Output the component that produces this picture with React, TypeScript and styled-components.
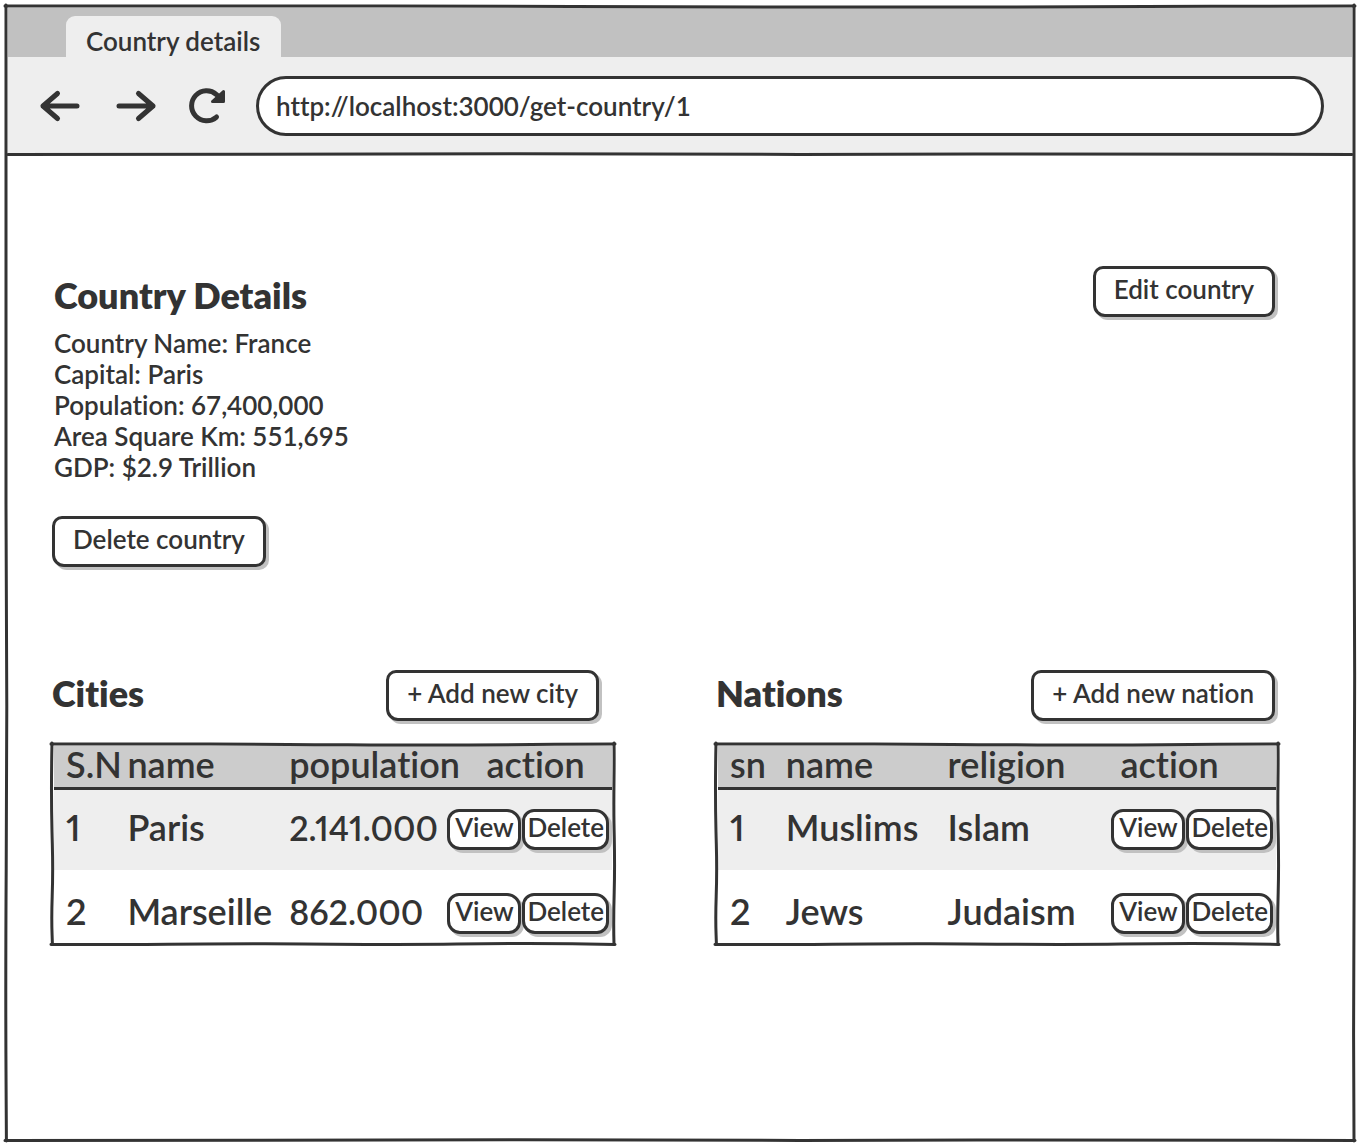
import React from "react";
import styled, { createGlobalStyle, css } from "styled-components";

const ink = "#333333";
const shade = "#c1c1c1";

const GlobalStyle = createGlobalStyle`
  *, *::before, *::after { box-sizing: border-box; }
  body {
    margin: 0;
    background: #ffffff;
    color: ${ink};
    font-family: Lato, "Open Sans", sans-serif;
    font-size: 26px;
    font-weight: 600;
    font-variant-ligatures: none;
    line-height: 31px;
  }
  button, input { font: inherit; font-variant-ligatures: none; color: inherit; }
  h1, h2, p, ul { margin: 0; padding: 0; }
`;

/* ---- hand-drawn pen strokes laid over the edges of a box ---- */

type Side = "top" | "right" | "bottom" | "left";

const sidePlace = {
  top: css`top: -2px; left: 0; width: 100%; height: 6px;`,
  bottom: css`bottom: -2px; left: 0; width: 100%; height: 6px;`,
  left: css`left: -2px; top: 0; width: 6px; height: 100%;`,
  right: css`right: -2px; top: 0; width: 6px; height: 100%;`,
};

const StrokeSvg = styled.svg<{ $side: Side }>`
  position: absolute;
  display: block;
  overflow: visible;
  pointer-events: none;
  fill: none;
  stroke: ${ink};
  stroke-width: 3px;
  stroke-linecap: round;
  ${(p) => sidePlace[p.$side]}
`;

const strokePaths: Record<Side, string> = {
  top: "M0 3 C15 2.4 28 3 42 3.4 S62 4.4 74 4 S90 3 100 3",
  bottom: "M0 3.4 C14 4 24 2.6 38 2.8 S60 4 72 3 S92 2.4 100 3.4",
  left: "M3 0 C2.4 14 2.2 28 3 44 S4.2 62 3.2 76 S3 92 3.4 100",
  right: "M3 0 C3.6 12 2.4 24 3 40 S4 60 3.2 74 S2.4 90 3 100",
};

function Stroke({ side }: { side: Side }) {
  const flat = side === "top" || side === "bottom";
  return (
    <StrokeSvg
      $side={side}
      viewBox={flat ? "0 0 100 6" : "0 0 6 100"}
      preserveAspectRatio="none"
      aria-hidden="true"
    >
      <path d={strokePaths[side]} vectorEffect="non-scaling-stroke" />
    </StrokeSvg>
  );
}

function PenOutline() {
  return (
    <>
      <Stroke side="top" />
      <Stroke side="right" />
      <Stroke side="bottom" />
      <Stroke side="left" />
    </>
  );
}

/* ---- browser window ---- */

const Page = styled.div`
  min-height: 100vh;
  padding: 5px;
  display: flex;
`;

const Window = styled.div`
  position: relative;
  flex: 1;
  min-width: 0;
  padding: 3px;
`;

const TabStrip = styled.div`
  display: flex;
  align-items: flex-end;
  height: 49px;
  padding-left: 58px;
  background: ${shade};
`;

const Tab = styled.button`
  height: 41px;
  padding: 9px 21px 0 20px;
  border: 0;
  border-radius: 9px 9px 0 0;
  background: #eeeeee;
  line-height: 31px;
  white-space: nowrap;
`;

const Toolbar = styled.div`
  position: relative;
  display: flex;
  align-items: center;
  height: 98px;
  padding: 0 28px 0 32px;
  background: #eeeeee;
`;

const NavButtons = styled.div`
  display: flex;
  gap: 36px;
  margin-right: 24px;
`;

const NavButton = styled.button`
  display: block;
  width: 40px;
  height: 40px;
  padding: 0;
  border: 0;
  background: none;
  svg { display: block; overflow: visible; }
`;

const Address = styled.input`
  flex: 1;
  min-width: 0;
  height: 60px;
  padding: 0 17px;
  border: 3px solid ${ink};
  border-radius: 30px;
  background: #ffffff;
  outline: 0;
`;

/* ---- page content ---- */

const Content = styled.main`
  padding: 111px 73px 60px 43px;
`;

const Button = styled.button<{ $small?: boolean }>`
  height: ${(p) => (p.$small ? 41 : 51)}px;
  min-width: ${(p) => (p.$small ? 74 : 100)}px;
  padding: ${(p) => (p.$small ? "0 2px 4px" : "0 18px 4px")};
  border: 3px solid ${ink};
  border-radius: ${(p) => (p.$small ? "12px 14px 12px 13px" : "10px 11px 10px 12px")};
  background: #ffffff;
  box-shadow: 3px 3px 0 ${shade};
  line-height: 31px;
  white-space: nowrap;
`;

const Summary = styled.section`
  display: flex;
  justify-content: space-between;
  align-items: flex-start;
  padding-right: 4px;
`;

const SummaryText = styled.div`
  padding: 8px 0 0 3px;
`;

const Title = styled.h1`
  font-size: 36px;
  font-weight: 800;
  line-height: 43px;
`;

const Facts = styled.ul`
  padding-top: 11px;
  list-style: none;
`;

const DeleteRow = styled.div`
  padding: 33px 0 0 1px;
`;

const Lists = styled.div`
  display: grid;
  grid-template-columns: repeat(2, minmax(0, 1fr));
  column-gap: 100px;
  padding-top: 103px;
`;

const ListHeader = styled.header<{ $inset: number }>`
  display: flex;
  justify-content: space-between;
  align-items: flex-start;
  height: 73px;
  padding-right: ${(p) => p.$inset}px;
  padding-left: 1px;
`;

const ListTitle = styled.h2`
  padding-top: 2px;
  font-size: 36px;
  font-weight: 800;
  line-height: 43px;
`;

const TableFrame = styled.div`
  position: relative;
  padding: 3px;
`;

const Table = styled.table`
  width: 100%;
  border-collapse: collapse;
  table-layout: fixed;
  font-size: 36px;
  line-height: 37px;
  white-space: nowrap;
`;

const HeadRow = styled.tr`
  height: 41px;
  background: #cccccc;
  border-bottom: 3px solid ${ink};
`;

const HeadCell = styled.th<{ $width?: string; $indent?: number }>`
  width: ${(p) => p.$width ?? "auto"};
  padding: 0 0 4px ${(p) => p.$indent ?? 12}px;
  font-weight: inherit;
  text-align: left;
`;

const BodyRow = styled.tr`
  height: 81px;
  &:nth-child(odd) { background: #eeeeee; }
  &:last-child { height: 72px; }
  &:last-child > td { padding-top: 15px; }
`;

const Cell = styled.td<{ $amount?: boolean }>`
  padding: 0 0 4px 12px;
  font-size: ${(p) => (p.$amount ? 34 : 36)}px;
  font-variant-numeric: proportional-nums;
`;

const ActionCell = styled.td`
  padding: 0 0 0 14px;
`;

const Actions = styled.div`
  display: flex;
  gap: 1px;
  font-size: 26px;
`;

type ListProps = {
  title: string;
  addLabel: string;
  inset: number;
  widths: string[];
  actionIndent: number;
  columns: string[];
  rows: string[][];
};

function EntityList({ title, addLabel, inset, widths, actionIndent, columns, rows }: ListProps) {
  return (
    <section>
      <ListHeader $inset={inset}>
        <ListTitle>{title}</ListTitle>
        <Button type="button">{addLabel}</Button>
      </ListHeader>
      <TableFrame>
        <Table aria-label={title}>
          <thead>
            <HeadRow>
              {columns.map((name, i) => (
                <HeadCell key={name} $width={widths[i]} scope="col">{name}</HeadCell>
              ))}
              <HeadCell $indent={actionIndent} scope="col">action</HeadCell>
            </HeadRow>
          </thead>
          <tbody>
            {rows.map((row) => (
              <BodyRow key={row[0]}>
                {row.map((value, i) => (
                  <Cell key={value} $amount={columns[i] === "population"}>{value}</Cell>
                ))}
                <ActionCell>
                  <Actions>
                    <Button type="button" $small>View</Button>
                    <Button type="button" $small>Delete</Button>
                  </Actions>
                </ActionCell>
              </BodyRow>
            ))}
          </tbody>
        </Table>
        <PenOutline />
      </TableFrame>
    </section>
  );
}

const facts = [
  "Country Name: France",
  "Capital: Paris",
  "Population: 67,400,000",
  "Area Square Km: 551,695",
  "GDP: $2.9 Trillion",
];

export default function App() {
  return (
    <Page>
      <GlobalStyle />
      <Window>
        <TabStrip role="tablist">
          <Tab type="button" role="tab" aria-selected="true">Country details</Tab>
        </TabStrip>
        <Toolbar>
          <NavButtons>
            <NavButton type="button" aria-label="Back">
              <svg width="40" height="40" viewBox="0 0 40 40" fill="none" stroke={ink} strokeWidth="5" strokeLinecap="round" strokeLinejoin="round">
                <path d="M37 20H3M17.500 7.500L3 20L17.500 32.500" />
              </svg>
            </NavButton>
            <NavButton type="button" aria-label="Forward">
              <svg width="40" height="40" viewBox="0 0 40 40" fill="none" stroke={ink} strokeWidth="5" strokeLinecap="round" strokeLinejoin="round">
                <path d="M3 20H37M22.500 7.500L37 20L22.500 32.500" />
              </svg>
            </NavButton>
            <NavButton type="button" aria-label="Reload">
              <svg width="40" height="40" viewBox="0 0 40 40" fill="none" stroke={ink} strokeWidth="5" strokeLinecap="round">
                <path d="M24.500 31A15 15 0 1 1 24.500 8.500L27 11" />
                <path d="M31.500 5.500V15.500H20.500Z" fill={ink} strokeWidth="3" strokeLinejoin="round" />
              </svg>
            </NavButton>
          </NavButtons>
          <Address type="text" aria-label="Address" defaultValue="http://localhost:3000/get-country/1" />
          <Stroke side="bottom" />
        </Toolbar>
        <Content>
          <Summary>
            <SummaryText>
              <Title>Country Details</Title>
              <Facts>
                {facts.map((line) => <li key={line}>{line}</li>)}
              </Facts>
            </SummaryText>
            <Button type="button">Edit country</Button>
          </Summary>
          <DeleteRow>
            <Button type="button">Delete country</Button>
          </DeleteRow>
          <Lists>
            <EntityList
              title="Cities"
              addLabel="+ Add new city"
              inset={16}
              widths={["11%", "29%", "28%"]}
              actionIndent={53}
              columns={["S.N", "name", "population"]}
              rows={[["1", "Paris", "2.141.000"], ["2", "Marseille", "862.000"]]}
            />
            <EntityList
              title="Nations"
              addLabel="+ Add new nation"
              inset={4}
              widths={["10%", "29%", "29%"]}
              actionIndent={23}
              columns={["sn", "name", "religion"]}
              rows={[["1", "Muslims", "Islam"], ["2", "Jews", "Judaism"]]}
            />
          </Lists>
        </Content>
        <PenOutline />
      </Window>
    </Page>
  );
}
